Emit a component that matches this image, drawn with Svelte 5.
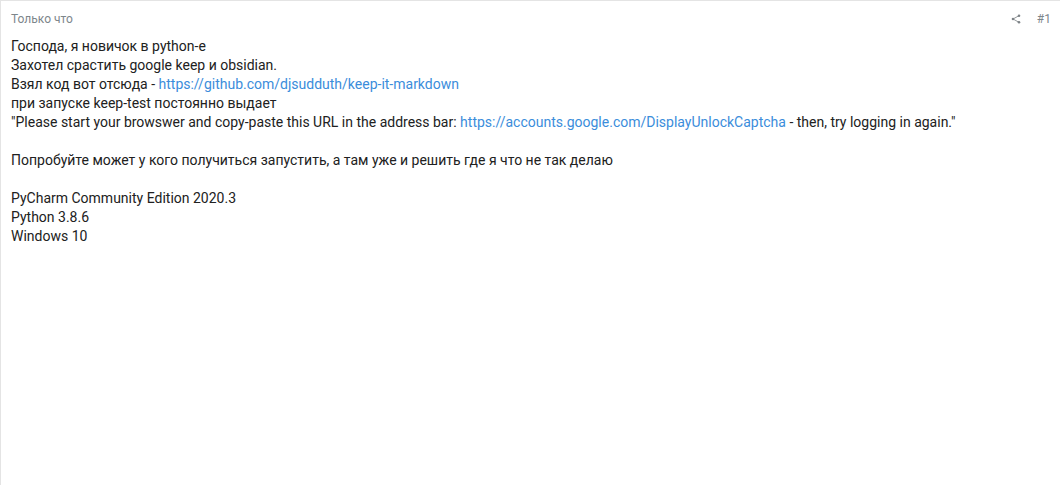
<script>
	const title = 'Только что'
</script>

<article class="post">
	<header>
		<span class="time">{title}</span>
		<div class="meta">
			<svg class="share" width="10" height="10" viewBox="0 0 10 10" aria-hidden="true">
				<path d="M8 1.7 2 5l6 3.3" fill="none" stroke="#8a8f92" stroke-width="0.9" />
				<circle cx="8" cy="1.7" r="1.3" fill="#7d8387" />
				<circle cx="2" cy="5" r="1.3" fill="#7d8387" />
				<circle cx="8" cy="8.3" r="1.3" fill="#7d8387" />
			</svg>
			<span class="num">#1</span>
		</div>
	</header>
	<div class="body">
		Господа, я новичок в python-е<br />
		Захотел срастить google keep и obsidian.<br />
		Взял код вот отсюда - <a href="#gh">https://github.com/djsudduth/keep-it-markdown</a><br />
		при запуске keep-test постоянно выдает<br />
		"Please start your browswer and copy-paste this URL in the address bar: <a href="#captcha">https://accounts.google.com/DisplayUnlockCaptcha</a> - then, try logging in again."<br />
		<br />
		Попробуйте может у кого получиться запустить, а там уже и решить где я что не так делаю<br />
		<br />
		PyCharm Community Edition 2020.3<br />
		Python 3.8.6<br />
		Windows 10
	</div>
</article>

<style>
	:global(body) {
		background: #fff;
	}

	.post {
		box-sizing: border-box;
		height: 485px;
		border-top: 1px solid #e4e4e4;
		border-left: 1px solid #e4e4e4;
		padding: 9px 9px 0 10px;
		font-family: Roboto, sans-serif;
		overflow: hidden;
	}

	header {
		display: flex;
		justify-content: space-between;
		align-items: center;
		height: 18px;
		font-size: 12px;
		color: #7d868b;
	}

	.meta {
		display: flex;
		align-items: center;
		gap: 16px;
	}

	.share {
		display: block;
	}

	.body {
		margin-top: 9px;
		font-size: 14px;
		line-height: 19px;
		color: #212121;
	}

	a {
		color: #3b8ddb;
		text-decoration: none;
	}
</style>
